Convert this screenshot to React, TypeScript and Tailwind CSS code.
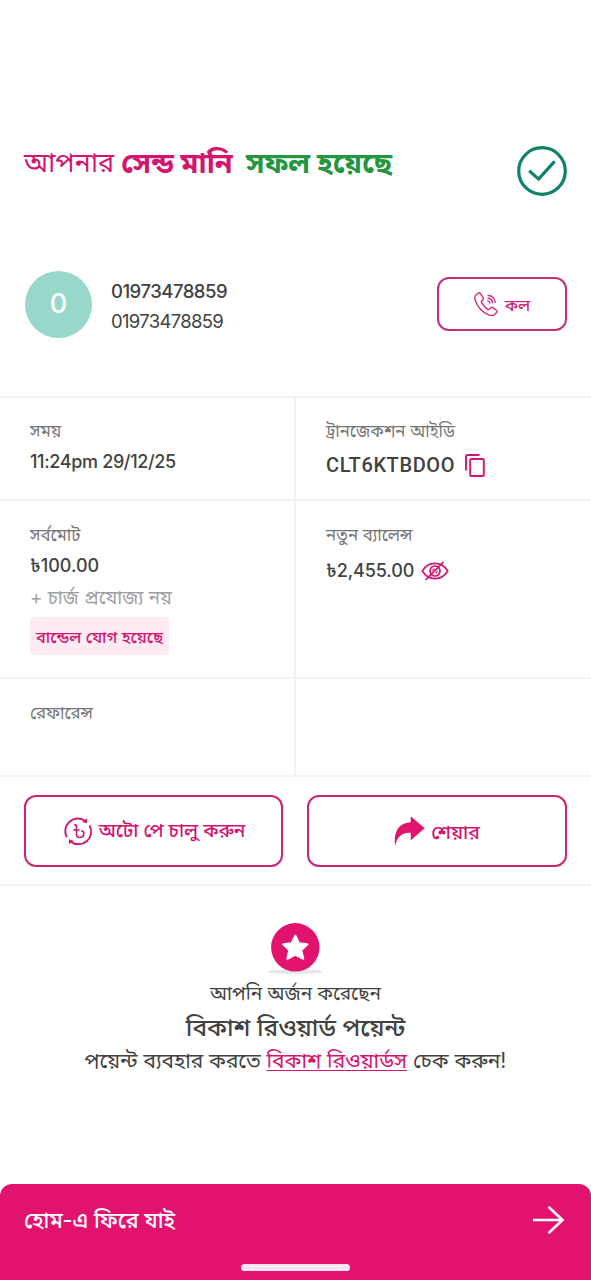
import type { ReactNode } from "react";

interface CellProps {
  label: string;
  className?: string;
  children?: ReactNode;
}

function DetailCell({ label, className = "", children }: CellProps) {
  return (
    <div className={`pl-[30px] ${className}`}>
      <p className="h-6 whitespace-nowrap text-[16.800px] leading-6 text-[#757575]">{label}</p>
      {children}
    </div>
  );
}

function SuccessIcon() {
  return (
    <svg className="h-[50px] w-[50px] shrink-0" viewBox="0 0 50 50" fill="none" stroke="#10826b">
      <circle cx="25" cy="25" r="23.300" strokeWidth="3.200" />
      <path d="M12.200 24.800l9.400 8.300L37.600 15.400" strokeWidth="3.200" />
    </svg>
  );
}

function CallIcon() {
  return (
    <svg className="h-6 w-6 shrink-0" viewBox="0 0 24 24" fill="none" stroke="#d12a7c" strokeWidth="1.400" strokeLinecap="round" strokeLinejoin="round">
      <path d="M4.100 1.200L2.200 2.700C.6 4 .5 6 1.200 8.200c2.200 6.400 7.200 12 13.500 14.700 2.100.8 4.400 1 5.900-.4l2-1.900c.7-.7.7-1.500 0-2.100l-3.700-2.900c-.7-.5-1.400-.5-2 .1l-1.300 1.300c-.6.6-1.500.6-2.200.1-2.300-1.700-4.200-3.900-5.700-6.300-.4-.7-.4-1.400.2-2l1-1c.6-.6.6-1.300.2-2L6.500 1.500c-.6-.9-1.500-1-2.400-.3z" />
      <path d="M13.800 8.900a2.400 2.400 0 012 2.100M14 6.200c2.600.1 4.300 1.900 4.600 4.500M14.200 3.500c4 .1 6.800 2.900 7.100 6.900" />
    </svg>
  );
}

function CopyIcon() {
  return (
    <svg className="h-[23px] w-5 shrink-0" viewBox="0 0 20 23" fill="none" stroke="#d4146f" strokeWidth="1.900">
      <path d="M1 16.500V2.500a1.500 1.500 0 011.500-1.500H14.500" />
      <rect x="5.200" y="5" width="13.600" height="17" rx="1" />
    </svg>
  );
}

function HiddenEyeIcon() {
  return (
    <svg className="h-5 w-7 shrink-0" viewBox="0 0 28 20" fill="none" stroke="#d4146f" strokeWidth="1.700">
      <path d="M1.300 10C4.300 5 8.800 2.400 14 2.400S23.700 5 26.700 10C23.700 15 19.200 17.600 14 17.600S4.300 15 1.300 10z" />
      <circle cx="14" cy="10" r="5" />
      <path d="M11.800 10.400a2 2 0 012-2.400M16.200 9.600a2 2 0 01-2 2.400" strokeWidth="1.200" />
      <path d="M4.500 19L22.500 1" />
    </svg>
  );
}

function AutoPayIcon() {
  return (
    <svg className="h-7 w-7 shrink-0 overflow-visible" viewBox="0 0 28 28" fill="none" stroke="#d4146f" strokeWidth="1.900">
      <path d="M2.700 20.200A12.700 12.700 0 0121.300 3.900" />
      <path d="M25.500 8.400A12.700 12.700 0 016.700 24.700" />
      <path d="M23.200 1.200l-.3 5-4.800-1.200zM4.800 27.300l.3-5 4.700 1.600z" fill="#d4146f" stroke="none" />
      <path d="M10.200 7.600c1.600.1 2.300.9 2.300 2.300v7.300c0 2.300 1.300 3.300 3.200 3.300 2.500 0 4.100-1.700 4.100-3.900 0-1.600-.9-2.700-2.600-2.800M9.400 13h6.200" strokeWidth="1.600" />
    </svg>
  );
}

function ShareIcon() {
  return (
    <svg className="h-[31px] w-[31px] shrink-0" viewBox="0 0 31 31" fill="#e2136e">
      <path d="M16.700.2L30.700 12.200 16.700 24.300V16.800C8.500 16.200 3.300 20.300 1.100 30-.8 15 5.200 6.700 16.700 6.300z" />
    </svg>
  );
}

function RewardIcon() {
  return (
    <svg className="mr-px h-[52px] w-14" viewBox="0 0 56 52">
      <ellipse cx="28.300" cy="48.600" rx="27.700" ry="2.200" fill="#e6e7e8" />
      <circle cx="28.300" cy="24.300" r="24.200" fill="#e2136e" />
      <path
        d="M28.300 12.700l3.700 7.700 8.300.9-6.100 5.900 2 8.500L28.300 31.500l-7.900 4.200 2-8.500-6.100-5.900 8.300-.9z"
        fill="#fff"
        stroke="#fff"
        strokeWidth="2.200"
        strokeLinejoin="round"
      />
    </svg>
  );
}

function ArrowIcon() {
  return (
    <svg className="mr-[2px] h-7 w-8 shrink-0" viewBox="0 0 32 28" fill="none" stroke="#fff" strokeWidth="2.600">
      <path d="M0 14h29.500M15.500 .8L29.500 14 15.500 27.200" />
    </svg>
  );
}

export default function App() {
  return (
    <div className="flex h-[1280px] w-[591px] flex-col overflow-hidden bg-white font-['Inter','Noto_Sans_Bengali','Noto_Sans',sans-serif] text-[#424242]">
      <header className="flex h-[270px] shrink-0 items-start justify-between pl-6 pr-6 pt-[146px]">
        <h1 className="mt-px flex whitespace-nowrap text-[27px] leading-8 text-[#d4146f]">
          <span className="w-[97px]">আপনার</span>
          <strong className="w-[125px] text-[28.800px] font-bold">সেন্ড মানি</strong>
          <strong className="text-[28.800px] font-bold text-[#24963f]">সফল হয়েছে</strong>
        </h1>
        <SuccessIcon />
      </header>

      <section className="flex h-[126px] shrink-0 items-start pl-[25px] pr-6">
        <div className="mt-[0.500px] flex h-[67px] w-[67px] items-center justify-center rounded-full bg-[#97d8ca] text-[27px] font-medium text-white">
          0
        </div>
        <div className="ml-[19px] flex-1 pt-[6px] text-[18.500px] leading-[30px]">
          <p className="font-medium tracking-[-0.500px]">01973478859</p>
          <p className="tracking-[-0.700px]">01973478859</p>
        </div>
        <button className="mt-[7px] flex h-[54px] w-[130px] items-center justify-center gap-[7px] rounded-xl border-2 border-[#c92c7b]">
          <CallIcon />
          <span className="whitespace-nowrap pt-px text-[16.500px] font-medium leading-6 text-[#c92c7b]">কল</span>
        </button>
      </section>

      <section className="grid h-[381px] shrink-0 grid-cols-[296px_295px] grid-rows-[103px_178px_98px] border-y-2 border-[#f3f3f3]">
        <DetailCell label="সময়" className="border-b-2 border-r-2 border-[#f3f3f3] pt-[21px]">
          <p className="mt-1 text-[18px] font-medium leading-[30px] tracking-[-0.350px]">11:24pm 29/12/25</p>
        </DetailCell>
        <DetailCell label="ট্রানজেকশন আইডি" className="border-b-2 border-[#f3f3f3] pt-[21px]">
          <div className="mt-[7px] flex items-center gap-[10px]">
            <span className="font-[Roboto] text-[20px] font-medium leading-[30px] tracking-[0.600px]">CLT6KTBDOO</span>
            <CopyIcon />
          </div>
        </DetailCell>

        <DetailCell label="সর্বমোট" className="border-b-2 border-r-2 border-[#f3f3f3] pt-[22px]">
          <p className="mt-1 text-[18px] font-medium leading-[30px]">৳100.00</p>
          <p className="mt-px whitespace-nowrap text-[18.800px] leading-8 text-[#9e9e9e]">+ চার্জ প্রযোজ্য নয়</p>
          <p className="mt-[3px] flex h-[38px] w-[139px] items-center justify-center whitespace-nowrap rounded-sm bg-[#fdeaf2] pt-[3px] text-[16.400px] font-medium text-[#d4146f]">
            বান্ডেল যোগ হয়েছে
          </p>
        </DetailCell>
        <DetailCell label="নতুন ব্যালেন্স" className="border-b-2 border-[#f3f3f3] pt-[22px]">
          <div className="mt-[9px] flex items-center gap-[7px]">
            <span className="text-[18px] font-medium leading-[30px] tracking-[-0.100px]">৳2,455.00</span>
            <HiddenEyeIcon />
          </div>
        </DetailCell>

        <DetailCell label="রেফারেন্স" className="border-r-2 border-[#f3f3f3] pt-[22px]" />
        <div />
      </section>

      <section className="grid h-[109px] shrink-0 grid-cols-[259px_260px] gap-6 border-b-2 border-[#f3f3f3] px-6 pt-[18px]">
        <button className="flex h-[72px] items-center justify-center gap-[7px] rounded-xl border-2 border-[#cc2474] pl-[2px]">
          <AutoPayIcon />
          <span className="whitespace-nowrap text-[19px] font-medium leading-8 text-[#d4146f]">অটো পে চালু করুন</span>
        </button>
        <button className="flex h-[72px] items-center justify-center gap-[6px] rounded-xl border-2 border-[#cc2474]">
          <ShareIcon />
          <span className="whitespace-nowrap pt-px text-[19.400px] font-medium leading-8 text-[#d4146f]">শেয়ার</span>
        </button>
      </section>

      <section className="flex flex-1 flex-col items-center whitespace-nowrap pt-[37px]">
        <RewardIcon />
        <p className="mt-[3px] text-[19px] leading-8">আপনি অর্জন করেছেন</p>
        <p className="text-[24.500px] font-medium leading-[34px]">বিকাশ রিওয়ার্ড পয়েন্ট</p>
        <p className="text-[20.900px] leading-[34px]">
          পয়েন্ট ব্যবহার করতে <a className="text-[#d4146f] underline decoration-1 underline-offset-2">বিকাশ রিওয়ার্ডস</a> চেক করুন!
        </p>
      </section>

      <footer className="flex h-24 shrink-0 flex-col items-center rounded-t-xl bg-[#e2136e] px-6 pt-5 text-white">
        <div className="flex w-full items-center justify-between">
          <span className="whitespace-nowrap text-[21.500px] font-medium leading-8">হোম-এ ফিরে যাই</span>
          <ArrowIcon />
        </div>
        <div className="mt-7 h-[7px] w-[109px] shrink-0 rounded-full bg-[#fce4f0]" />
      </footer>
    </div>
  );
}
